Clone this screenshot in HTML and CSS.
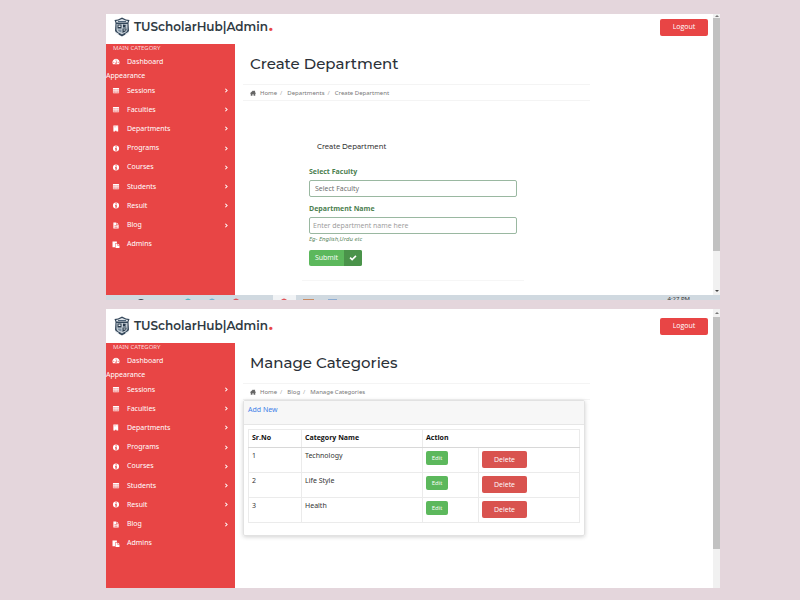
FILE: index.html
```html
<!DOCTYPE html>
<html lang="en">
<head>
<meta charset="utf-8">
<meta name="viewport" content="width=device-width, initial-scale=1">
<title>TUScholarHub | Admin</title>
<link rel="stylesheet" href="styles.css">
</head>
<body>
<svg class="sprite" aria-hidden="true">
  <symbol id="i-dash" viewBox="0 0 16 16"><path fill-rule="evenodd" d="M8 2a8 8 0 0 0-7 12h14A8 8 0 0 0 8 2zM8 3.300a1.200 1.200 0 1 1 0 2.400 1.200 1.200 0 0 1 0-2.400zM3 8.500a1.200 1.200 0 1 1 0 2.400 1.200 1.200 0 0 1 0-2.400zM13 8.500a1.200 1.200 0 1 1 0 2.400 1.200 1.200 0 0 1 0-2.400zM10 6l1 .4-1.800 4.200a1.600 1.600 0 1 1-1.200-.5z"/></symbol>
  <symbol id="i-table" viewBox="0 0 16 16"><path fill-rule="evenodd" d="M2 2h12a1 1 0 0 1 1 1v10a1 1 0 0 1-1 1H2a1 1 0 0 1-1-1V3a1 1 0 0 1 1-1zM2 5v2h3.500V5zM6.300 5v2h3.400V5zM10.500 5v2H14V5zM2 8v2h3.500V8zM6.300 8v2h3.400V8zM10.500 8v2H14V8zM2 11v2h3.500v-2zM6.300 11v2h3.400v-2zM10.500 11v2H14v-2z"/><path opacity=".45" d="M2 4h12v9H2z"/></symbol>
  <symbol id="i-building" viewBox="0 0 16 16"><path fill-rule="evenodd" d="M2 1h11v14h-4v-2H6v2H2zM4 3v1h1V3zM7 3v1h1V3zM10 3v1h1V3zM4 6v1h1V6zM7 6v1h1V6zM10 6v1h1V6z"/></symbol>
  <symbol id="i-info" viewBox="0 0 16 16"><path fill-rule="evenodd" d="M8 1a7 7 0 1 1 0 14A7 7 0 0 1 8 1zM7 3v2.500h2.500V3zM6 7v1.500h1V11H6v1.500h4.500V11h-1V7z"/></symbol>
  <symbol id="i-file" viewBox="0 0 16 16"><path fill-rule="evenodd" d="M2 1h6v5h6v9H2zM9 1l5 4H9zM4.500 8v1h7V8zM4.500 10v1h7v-1zM4.500 12v1h7v-1z"/></symbol>
  <symbol id="i-paste" viewBox="0 0 16 16"><path d="M0 1h10v4H6v9H0zM7 6h4v4h5v6H7zM12 6l4 3h-4z"/></symbol>
  <symbol id="i-home" viewBox="0 0 16 16"><path d="M8 1l3 2.600V2h2.500v4L16 8.500l-1 1.200-1-.8V15H9.500v-4h-3v4H2V8.900l-1 .8L0 8.500z"/></symbol>
  <symbol id="i-check" viewBox="0 0 16 16"><path d="M1 8.500L3.300 6l3 3L12.800 2.500 15 5l-8.700 8.700z"/></symbol>
  <symbol id="i-right" viewBox="0 0 8 12"><path d="M2 3l3 3-3 3" fill="none" stroke="currentColor" stroke-width="1.800"/></symbol>
  <symbol id="i-crest" viewBox="0 0 32 40">
    <path fill="#34475a" d="M1 6l7-1 8-4 8 4 7 1-2 6 1 15c-1 6-8 8-14 12C10 35 3 33 2 27l1-15z"/>
    <path fill="#dfe5ea" d="M4 8l5-1 7-3 7 3 5 1-1 3H5z"/>
    <path fill="#50657a" d="M8 8h16v2H8z"/>
    <path fill="#c7d0d8" d="M5 14h22v12c-1 5-7 6-11 9-4-3-10-4-11-9z"/>
    <path fill="#26384a" d="M7 15h8v8H7zM17 23h8v3c-1 3-5 4-8 6zM18 15l7 1-3 2 3 3h-7z"/>
    <path fill="#7b8fa1" d="M7 25h8v6c-4-1-7-3-8-6z"/>
    <path fill="#eef1f4" d="M9 17h4v3H9zM19 25h4v2h-4zM2 29l8 5-2 2-5-3zM30 29l-8 5 2 2 5-3z"/>
  </symbol>
</svg>

<section class="window" aria-label="Create Department">
  <header class="topbar">
    <a class="brand" href="#"><svg class="crest"><use href="#i-crest"/></svg><span>TUScholarHub|Admin<b>.</b></span></a>
    <button class="logout" type="button">Logout</button>
  </header>
  <div class="body">
    <nav class="sidebar">
      <p class="caption">MAIN CATEGORY</p>
      <a class="item" href="#"><svg><use href="#i-dash"/></svg>Dashboard</a>
      <p class="group">Appearance</p>
      <div class="menu">
        <a class="item" href="#"><svg><use href="#i-table"/></svg>Sessions<svg class="arrow"><use href="#i-right"/></svg></a>
        <a class="item" href="#"><svg><use href="#i-table"/></svg>Faculties<svg class="arrow"><use href="#i-right"/></svg></a>
        <a class="item" href="#"><svg><use href="#i-building"/></svg>Departments<svg class="arrow"><use href="#i-right"/></svg></a>
        <a class="item" href="#"><svg><use href="#i-info"/></svg>Programs<svg class="arrow"><use href="#i-right"/></svg></a>
        <a class="item" href="#"><svg><use href="#i-info"/></svg>Courses<svg class="arrow"><use href="#i-right"/></svg></a>
        <a class="item" href="#"><svg><use href="#i-table"/></svg>Students<svg class="arrow"><use href="#i-right"/></svg></a>
        <a class="item" href="#"><svg><use href="#i-info"/></svg>Result<svg class="arrow"><use href="#i-right"/></svg></a>
        <a class="item" href="#"><svg><use href="#i-file"/></svg>Blog<svg class="arrow"><use href="#i-right"/></svg></a>
        <a class="item" href="#"><svg><use href="#i-paste"/></svg>Admins</a>
      </div>
    </nav>
    <main class="content">
      <h1>Create Department</h1>
      <nav class="crumbs"><svg><use href="#i-home"/></svg><a href="#">Home</a><i>/</i><a href="#">Departments</a><i>/</i><span>Create Department</span></nav>
      <form class="form-card">
        <h2>Create Department</h2>
        <label for="faculty">Select Faculty</label>
        <select id="faculty"><option>Select Faculty</option></select>
        <label for="dept">Department Name</label>
        <input id="dept" type="text" placeholder="Enter department name here">
        <small>Eg- English,Urdu etc</small>
        <button class="submit" type="button"><span>Submit</span><svg><use href="#i-check"/></svg></button>
      </form>
    </main>
  </div>
  <div class="scrollbar"><span class="up"></span><span class="thumb"></span><span class="down"></span></div>
  <div class="taskbar">
    <svg viewBox="0 0 240 5">
      <path fill="#f1f3f5" d="M167 0h23v5h-23z"/>
      <path fill="#35414b" d="M32 5q3-2 6 0z"/>
      <path fill="#4fb9c4" d="M79 5q3-3 6 0z"/>
      <path fill="#6db3d2" d="M103 5q3-3 6 0z"/>
      <path fill="#e0555a" d="M127 5q3-3 6 0zM175 5q3-3 6 0z"/>
      <path fill="#c98b62" d="M197 4h11v1h-11z"/>
      <path fill="#8cacd2" d="M222 4h9v1h-9z"/>
    </svg>
    <span class="clock">4:27 PM</span>
  </div>
</section>

<section class="window second" aria-label="Manage Categories">
  <header class="topbar">
    <a class="brand" href="#"><svg class="crest"><use href="#i-crest"/></svg><span>TUScholarHub|Admin<b>.</b></span></a>
    <button class="logout" type="button">Logout</button>
  </header>
  <div class="body">
    <nav class="sidebar">
      <p class="caption">MAIN CATEGORY</p>
      <a class="item" href="#"><svg><use href="#i-dash"/></svg>Dashboard</a>
      <p class="group">Appearance</p>
      <div class="menu">
        <a class="item" href="#"><svg><use href="#i-table"/></svg>Sessions<svg class="arrow"><use href="#i-right"/></svg></a>
        <a class="item" href="#"><svg><use href="#i-table"/></svg>Faculties<svg class="arrow"><use href="#i-right"/></svg></a>
        <a class="item" href="#"><svg><use href="#i-building"/></svg>Departments<svg class="arrow"><use href="#i-right"/></svg></a>
        <a class="item" href="#"><svg><use href="#i-info"/></svg>Programs<svg class="arrow"><use href="#i-right"/></svg></a>
        <a class="item" href="#"><svg><use href="#i-info"/></svg>Courses<svg class="arrow"><use href="#i-right"/></svg></a>
        <a class="item" href="#"><svg><use href="#i-table"/></svg>Students<svg class="arrow"><use href="#i-right"/></svg></a>
        <a class="item" href="#"><svg><use href="#i-info"/></svg>Result<svg class="arrow"><use href="#i-right"/></svg></a>
        <a class="item" href="#"><svg><use href="#i-file"/></svg>Blog<svg class="arrow"><use href="#i-right"/></svg></a>
        <a class="item" href="#"><svg><use href="#i-paste"/></svg>Admins</a>
      </div>
    </nav>
    <main class="content">
      <h1>Manage Categories</h1>
      <nav class="crumbs"><svg><use href="#i-home"/></svg><a href="#">Home</a><i>/</i><a href="#">Blog</a><i>/</i><span>Manage Categories</span></nav>
      <div class="card">
        <div class="card-head"><a href="#">Add New</a></div>
        <div class="card-body">
          <table>
            <colgroup><col class="c-no"><col class="c-name"><col class="c-edit"><col></colgroup>
            <thead><tr><th>Sr.No</th><th>Category Name</th><th colspan="2">Action</th></tr></thead>
            <tbody>
              <tr><td>1</td><td>Technology</td><td><button class="edit" type="button">Edit</button></td><td><button class="delete" type="button">Delete</button></td></tr>
              <tr><td>2</td><td>Life Style</td><td><button class="edit" type="button">Edit</button></td><td><button class="delete" type="button">Delete</button></td></tr>
              <tr><td>3</td><td>Health</td><td><button class="edit" type="button">Edit</button></td><td><button class="delete" type="button">Delete</button></td></tr>
            </tbody>
          </table>
        </div>
      </div>
    </main>
  </div>
  <div class="scrollbar"><span class="up"></span><span class="thumb"></span></div>
</section>
</body>
</html>
```
FILE: styles.css
```css
* { box-sizing: border-box; }

body {
  margin: 0;
  padding: 14px 10% 12px 106px;
  min-height: 100vh;
  display: flex;
  flex-direction: column;
  gap: 9px;
  background: #e4d6dc;
  font: 7px/10px "Noto Sans", "Open Sans", sans-serif;
  color: #333;
}

h1, h2, p { margin: 0; }
a { color: inherit; text-decoration: none; }
svg { fill: currentColor; flex: none; }
button, input, select { font: 7px/10px "Open Sans", "Noto Sans", sans-serif; margin: 0; border: 0; padding: 0; }
button { color: #fff; border-radius: 2px; }
.sprite { position: absolute; width: 0; height: 0; }

.window {
  display: grid;
  grid-template-columns: 1fr 7px;
  grid-template-rows: 30px 1fr auto;
  min-height: 286px;
  background: #fff;
}
.window.second { grid-template-rows: 34px 1fr; min-height: 279px; }

.topbar {
  display: flex;
  align-items: center;
  justify-content: space-between;
  padding: 0 5px 4px 8px;
}
.second .topbar { padding-bottom: 0; }
.brand {
  display: flex;
  align-items: center;
  gap: 4px;
  font: 600 12px/18px Montserrat, Inter, sans-serif;
  color: #2f3a43;
}
.brand b { color: #e84545; padding-left: 1px; }
.crest { width: 16px; height: 20px; }
.logout { width: 48px; height: 17px; background: #e84545; }

.body { display: flex; min-width: 0; }
.sidebar { width: 129px; flex: none; background: #e84545; color: #fff; padding-bottom: 35px; }
.caption { font-size: 6px; line-height: 8px; padding-left: 7px; color: #fbdcdc; }
.item { display: flex; align-items: center; padding: 0 6px; height: 19px; }
.item svg { width: 8px; height: 7px; margin-right: 7px; }
.item .arrow { width: 5px; height: 7px; margin: 0 0 0 auto; }
.group { line-height: 10px; }
.menu { display: grid; grid-auto-rows: 1fr; height: 173px; }

.content { flex: 1; min-width: 0; padding: 0 8px; }
h1 {
  font: 500 15px/24px Montserrat, Inter, sans-serif;
  color: #2b3138;
  padding: 8px 7px;
}
.crumbs {
  display: flex;
  align-items: center;
  width: 75%;
  height: 17px;
  padding-left: 7px;
  border: solid #f4f4f4;
  border-width: 1px 0;
  font-size: 6px;
  color: #777;
}
.crumbs svg { width: 6px; height: 6px; margin-right: 4px; color: #666; }
.crumbs i { margin: 0 5px 0 3px; font-style: normal; color: #aaa; }

.form-card {
  display: flex;
  flex-direction: column;
  align-items: stretch;
  width: 48%;
  margin: 29px 0 0 59px;
  padding: 6px 7px 14px;
  border-bottom: 1px solid #f6f6f6;
}
h2 { font: 500 7px/22px Montserrat, Inter, sans-serif; color: #333; padding: 0 8px 9px; }
.form-card label { line-height: 10px; padding-bottom: 3px; font-family: "Open Sans", sans-serif; font-weight: 700; color: #4c8050; }
.form-card select, .form-card input {
  appearance: none;
  width: 100%;
  height: 17px;
  border: 1px solid #9ab8a1;
  border-radius: 2px;
  background: #fff;
  color: #666;
}
.form-card select { padding: 0 5px; margin-bottom: 7px; }
.form-card input { padding: 0 3px; }
.form-card input::placeholder { color: #999; }
.form-card small { font-size: 6px; line-height: 10px; font-style: italic; color: #5f8a64; margin-bottom: 6px; }
.submit {
  display: flex;
  align-items: stretch;
  align-self: flex-start;
  height: 16px;
  background: #5cb85c;
  line-height: 16px;
  overflow: hidden;
}
.submit span { width: 35px; }
.submit svg { width: 18px; height: 16px; padding: 4px 5px; background: #4a934a; }

.card {
  width: 74%;
  min-width: 341px;
  min-height: 136px;
  border: 1px solid #e2e2e2;
  border-radius: 2px;
  box-shadow: 0 1px 4px rgba(0, 0, 0, .18);
}
.card-head { height: 24px; padding: 4px; background: #f7f7f7; border-bottom: 1px solid #e6e6e6; color: #3f7fe8; }
.card-body { padding: 4px; }
table { width: 100%; table-layout: fixed; border-collapse: collapse; }
.c-no { width: 53px; }
.c-name { width: 121px; }
.c-edit { width: 56px; }
th, td { border: 1px solid #ebebeb; padding: 3px; text-align: left; vertical-align: top; }
th { height: 18px; color: #111; font-family: "Open Sans", sans-serif; border-bottom-color: #d8d8d8; }
td { height: 25px; }
td button { display: block; }
.edit { width: 22px; height: 14px; font-size: 6px; background: #5cb85c; }
.delete { width: 45px; height: 17px; background: #d9534f; }

.scrollbar {
  grid-column: 2;
  grid-row: 1 / 3;
  display: flex;
  flex-direction: column;
  align-items: center;
  background: #f1f1f1;
}
.topbar, .body { grid-column: 1; }
.up { width: 0; margin: 1px 0; border: solid transparent; border-width: 0 2px 2px; border-bottom-color: #777; }
.thumb { width: 100%; flex: 0 0 83%; background: #c1c1c1; }
.down { width: 0; margin: auto 0 3px; border: solid transparent; border-width: 2px 2px 0; border-top-color: #444; }
.second .up { margin: 3px 0; }

.taskbar {
  grid-column: 1 / 3;
  display: flex;
  justify-content: space-between;
  height: 5px;
  overflow: hidden;
  background: #d0d9e0;
}
.taskbar svg { width: 240px; height: 5px; }
.clock { font-size: 6px; line-height: 9px; color: #333; padding-right: 30px; }
```
